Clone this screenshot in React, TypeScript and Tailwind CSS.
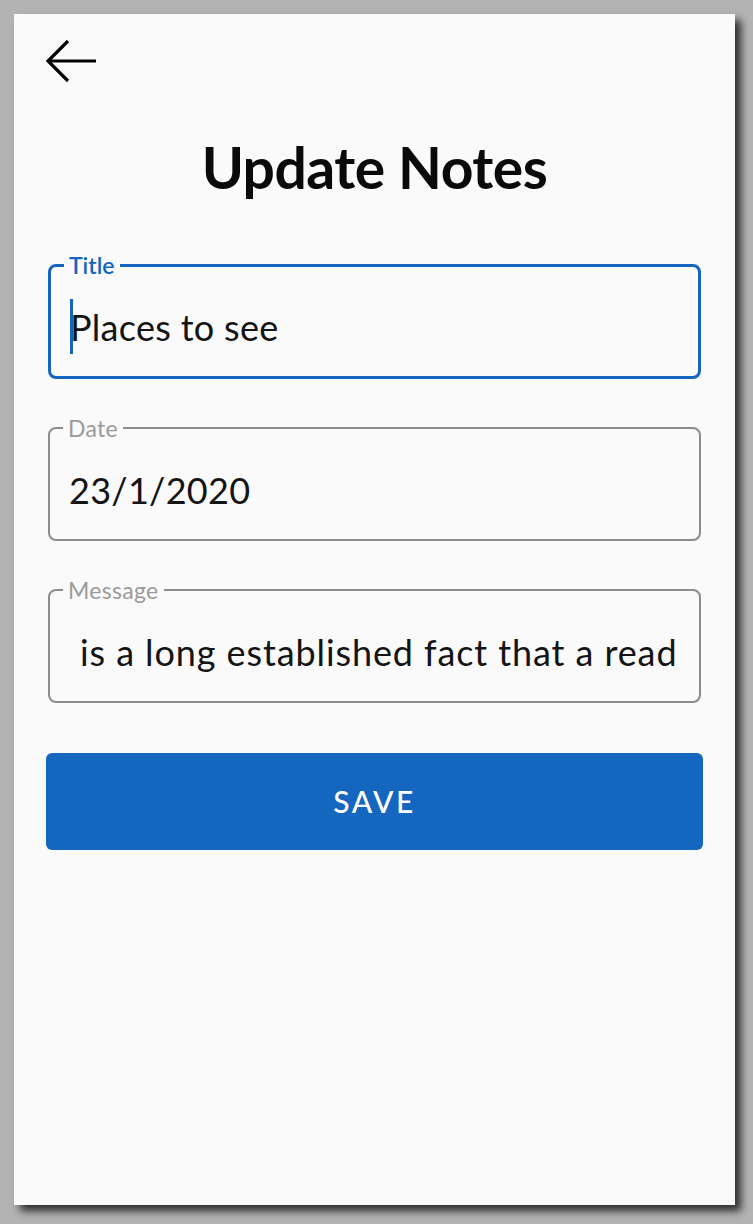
import React from "react";

function Field({
  label,
  value,
  focused = false,
  indent = false,
}: {
  label: string;
  value: string;
  focused?: boolean;
  indent?: boolean;
}) {
  return (
    <fieldset
      className={
        "rounded-[8px] " +
        (focused ? "border-[3px] border-[#1565c0]" : "border-2 border-[#8c8c8c]")
      }
    >
      <legend
        className={
          "ml-[13px] px-[5px] text-[23px] leading-[24px] " +
          (focused ? "text-[#1565c0] font-semibold" : "text-[#9a9a9a] tracking-[0.3px]")
        }
      >
        {label}
      </legend>
      <div className="h-[99px] flex items-center overflow-hidden pl-[19px] pr-[16px]">
        {focused && <span className="w-[3px] h-[55px] bg-[#1565c0] -mr-[3px] shrink-0" />}
        <span
          className={
            "text-[36px] text-[#141414] whitespace-nowrap " +
            (indent ? "pl-[11px] tracking-[0.9px]" : "tracking-[0.3px]")
          }
        >
          {value}
        </span>
      </div>
    </fieldset>
  );
}

export default function App() {
  return (
    <div
      className="w-[753px] h-[1224px] bg-[#b3b3b3] pt-[14px] pl-[14px]"
      style={{ fontFamily: "Lato, 'Noto Sans', sans-serif" }}
    >
      <div className="w-[721px] h-[1191px] bg-[#fafafa] shadow-[6px_6px_8px_rgba(0,0,0,0.75)] flex flex-col">
        {/* back arrow */}
        <div className="pl-[32px] pt-[25px]">
          <svg width="52" height="44" viewBox="0 0 52 44" fill="none" stroke="#000" strokeWidth="3.2">
            <path d="M2 22 H50" />
            <path d="M22 2 L2 22 L22 42" />
          </svg>
        </div>

        {/* heading */}
        <h1 className="text-center text-[57px] font-bold text-[#0a0a0a] mt-[54px] leading-[60px] tracking-[-0.5px]">
          Update Notes
        </h1>

        {/* form */}
        <div className="px-[34px] mt-[56px] flex flex-col gap-[37px]">
          <Field label="Title" value="Places to see" focused />
          <Field label="Date" value="23/1/2020" />
          <Field label="Message" value="is a long established fact that a read" indent />
        </div>

        <div className="px-[32px] mt-[50px]">
          <button className="w-full h-[97px] rounded-[6px] bg-[#1466bf] text-white text-[30px] tracking-[2.5px] font-medium">
            SAVE
          </button>
        </div>
      </div>
    </div>
  );
}
